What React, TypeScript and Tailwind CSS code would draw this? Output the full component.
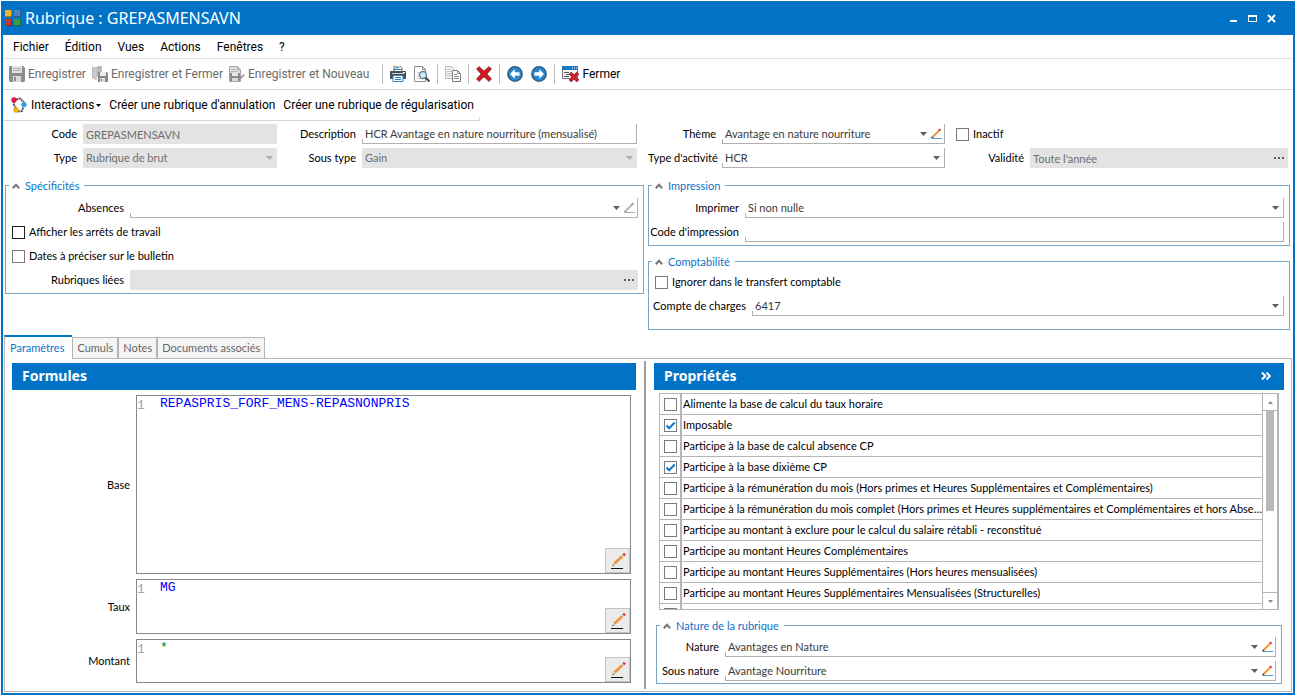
import React, { useState } from "react";

// Ligne de la liste des propriétés
interface Propriete {
  libelle: string;
  coche: boolean;
}

const menus = ["Fichier", "Édition", "Vues", "Actions", "Fenêtres", "?"];

const onglets = ["Paramètres", "Cumuls", "Notes", "Documents associés"];

const proprietesInitiales: Propriete[] = [
  { libelle: "Alimente la base de calcul du taux horaire", coche: false },
  { libelle: "Imposable", coche: true },
  { libelle: "Participe à la base de calcul absence CP", coche: false },
  { libelle: "Participe à la base dixième CP", coche: true },
  {
    libelle:
      "Participe à la rémunération du mois (Hors primes et Heures Supplémentaires et Complémentaires)",
    coche: false,
  },
  {
    libelle:
      "Participe à la rémunération du mois complet (Hors primes et Heures supplémentaires et Complémentaires et hors Abse…",
    coche: false,
  },
  {
    libelle: "Participe au montant à exclure pour le calcul du salaire rétabli - reconstitué",
    coche: false,
  },
  { libelle: "Participe au montant Heures Complémentaires", coche: false },
  {
    libelle: "Participe au montant Heures Supplémentaires (Hors heures mensualisées)",
    coche: false,
  },
  {
    libelle: "Participe au montant Heures Supplémentaires Mensualisées (Structurelles)",
    coche: false,
  },
  { libelle: "", coche: false },
];

/* ---------- Icônes ---------- */

const IconeApp = () => (
  <svg width="16" height="16" viewBox="0 0 16 16">
    <rect x="0" y="0" width="7" height="7" fill="#f2b61c" />
    <rect x="9" y="0" width="7" height="7" fill="#4f7fc4" />
    <rect x="0" y="9" width="7" height="7" fill="#c8372d" />
    <rect x="9" y="9" width="7" height="7" fill="#3c9a48" />
    <path d="M0 6.5h7M6.5 0v7M9 6.5h7M15.5 0v7M0 15.5h7M6.5 9v7M9 15.5h7M15.5 9v7" stroke="#000" strokeOpacity=".3" />
  </svg>
);

const IconeDisquette = () => (
  <svg width="16" height="16" viewBox="0 0 16 16">
    <path d="M1 0h13l2 2v13l-1 1H1l-1-1V1z" fill="#8c8c8c" />
    <rect x="3" y="0" width="10" height="7" fill="#e3e3e3" />
    <path d="M4 2.5h8M4 4.5h8" stroke="#b0b0b0" />
    <rect x="4" y="10" width="8" height="6" fill="#d9d9d9" />
    <rect x="5" y="11" width="2" height="4" fill="#8c8c8c" />
  </svg>
);

const IconeDisquetteFermer = () => (
  <svg width="16" height="16" viewBox="0 0 16 16">
    <path d="M0 1h5l1-1h4v11H4v3l-4-2z" fill="#b9b9b9" />
    <path d="M5 2v12L1 12V1z" fill="#c9c9c9" />
    <path d="M6 6h9l1 1v9H6z" fill="#8a8a8a" />
    <rect x="8" y="6" width="6" height="4" fill="#ececec" />
    <rect x="8" y="12" width="5" height="4" fill="#e0e0e0" />
    <rect x="9" y="13" width="1" height="2" fill="#777" />
  </svg>
);

const IconeDisquetteNouveau = () => (
  <svg width="16" height="16" viewBox="0 0 16 16">
    <path d="M.5.5h8l3 3v12H.5z" fill="#dedede" stroke="#a6a6a6" />
    <path d="M8.500.5v3h3" fill="none" stroke="#a6a6a6" />
    <path d="M2 3.500h5M2 5.500h7" stroke="#b5b5b5" />
    <rect x="1" y="7" width="10" height="8" fill="#8a8a8a" />
    <rect x="3" y="7" width="6" height="3" fill="#e8e8e8" />
    <rect x="3" y="12" width="6" height="3" fill="#dcdcdc" />
    <path d="M10 14l1-3 4-3 1 1-4 4z" fill="#9a9a9a" />
  </svg>
);

const IconeImprimante = () => (
  <svg width="16" height="16" viewBox="0 0 16 16">
    <path d="M4 0h6l2 2v4H4z" fill="#fff" stroke="#555" strokeWidth=".8" />
    <path d="M3 3.500h9M5 1.700h4" stroke="#2a7db8" />
    <rect x="0" y="5" width="16" height="8" rx="1" fill="#4b4f54" />
    <path d="M2 7.500h12" stroke="#cfd3d6" />
    <rect x="13" y="6" width="2" height="1" fill="#fff" />
    <path d="M3 9.500h10v6H3z" fill="#fff" stroke="#3c83b5" />
    <path d="M5 11.500h6M5 13.500h6" stroke="#2a7db8" />
  </svg>
);

const IconeApercu = () => (
  <svg width="16" height="16" viewBox="0 0 16 16">
    <path d="M.5.5h8l3 3v12H.5z" fill="#fff" stroke="#8c8c8c" />
    <path d="M8.500.5v3h3" fill="none" stroke="#8c8c8c" />
    <path d="M3 6.500h3M3 8.500h2M3 10.500h2M3 12.500h4" stroke="#d0d0d0" />
    <circle cx="9" cy="9" r="3.500" fill="#d3e9f7" stroke="#5b7f99" strokeWidth="1.300" />
    <path d="M11.500 11.500l4 4" stroke="#4a4a4a" strokeWidth="2.200" />
  </svg>
);

const IconeCopier = () => (
  <svg width="16" height="16" viewBox="0 0 16 16">
    <path d="M.5.5h6l3 3v9h-9z" fill="#f1f1f1" stroke="#bcbcbc" />
    <path d="M2 3.500h4M2 5.500h5M2 7.500h5M2 9.500h5" stroke="#c8c8c8" />
    <path d="M7.500 4.500h5l3 3v8h-8z" fill="#fff" stroke="#7d7d7d" />
    <path d="M12.500 4.500v3h3M9 8.500h3M9 10.500h5M9 12.500h5" fill="none" stroke="#8d8d8d" />
  </svg>
);

const IconeSupprimer = () => (
  <svg width="16" height="16" viewBox="0 0 16 16">
    <path
      d="M3 .5L8 5l5-4.500 2.500 2.500L11 8l4.500 5-2.500 2.500L8 11l-5 4.500L.5 13 5 8 .5 3z"
      fill="#d3151f"
      stroke="#7d4a4c"
      strokeWidth=".8"
    />
  </svg>
);

const IconeFleche = ({ versDroite }: { versDroite?: boolean }) => (
  <svg width="16" height="16" viewBox="0 0 16 16">
    <circle cx="8" cy="8" r="7.200" fill="#2786cc" stroke="#35597a" strokeWidth="1.400" />
    <path
      d={versDroite ? "M13 8L8.300 3.300v3H3.500v3.400h4.800v3z" : "M3 8l4.700-4.700v3h4.800v3.400H7.700v3z"}
      fill="#fff"
    />
  </svg>
);

const IconeFermer = () => (
  <svg width="17" height="16" viewBox="0 0 17 16">
    <path d="M.5.500h15v12H.5z" fill="#f4f4f4" stroke="#777" />
    <rect x="0" y="0" width="16" height="4" fill="#1e78bd" />
    <path d="M10 2h1M12 2h1M14 2h1" stroke="#fff" />
    <path d="M2 6.500h5M4 8.500h3M2 10.500h5" stroke="#555" />
    <path d="M8 7l8 8M16 7l-8 8" stroke="#8f3339" strokeWidth="3.600" />
    <path d="M8 7l8 8M16 7l-8 8" stroke="#d3202a" strokeWidth="2.400" />
  </svg>
);

const IconeInteractions = () => (
  <svg width="16" height="16" viewBox="0 0 16 16">
    <path d="M3 4v4l3 5M5 2.500l4-1 4 4M13 8l-2 6-5 .500" fill="none" stroke="#5c5c5c" strokeWidth="2" strokeDasharray="2.200 .6" />
    <circle cx="3" cy="3" r="2.700" fill="#e5173f" />
    <circle cx="13" cy="7.500" r="2.600" fill="#2ea3e6" />
    <circle cx="5" cy="13" r="2.700" fill="#f2b211" />
  </svg>
);

// Petit crayon des champs, grisé quand le champ est vide
const IconeCrayon = ({ gris }: { gris?: boolean }) => (
  <svg width="11" height="11" viewBox="0 0 12 12">
    <path d="M1 11.500h11" stroke={gris ? "#9a9a9a" : "#3f8fc6"} />
    <path d="M1.800 9.800L9 2.600" stroke={gris ? "#b5b5b5" : "#f0962c"} strokeWidth="2.200" />
    <path d="M8.800 2.800l1.500-1.500" stroke={gris ? "#999" : "#c9304c"} strokeWidth="2.300" />
    <path d="M0 11.500l.8-2.600 1.900 1.800z" fill={gris ? "#888" : "#333"} />
  </svg>
);

const IconeCrayonBouton = () => (
  <svg width="16" height="16" viewBox="0 0 16 16">
    <path d="M1 15.500h12" stroke="#111" />
    <path d="M4.500 10.500l8-7.500" stroke="#f2913a" strokeWidth="2.600" />
    <path d="M12 3.500l1.300-1.200" stroke="#d9cfc6" strokeWidth="2.600" />
    <path d="M13.300 2.300l1.700-1.500" stroke="#d63c35" strokeWidth="2.800" />
    <path d="M2.500 13l1-3.500 2.200 2.300z" fill="#e8c9a0" />
    <path d="M2.300 13.200l.6-1.700 1 1z" fill="#222" />
  </svg>
);

const Triangle = ({ className = "text-[#5f5f5f]" }: { className?: string }) => (
  <svg width="7" height="4" viewBox="0 0 7 4" className={className}>
    <path d="M0 0h7L3.500 4z" fill="currentColor" />
  </svg>
);

const TroisPoints = () => (
  <svg width="11" height="2" viewBox="0 0 11 2">
    <path d="M0 0h2v2H0zM4 0h2v2H4zM8 0h2v2H8z" fill="#5a5a5a" />
  </svg>
);

/* ---------- Champs ---------- */

const styleActif =
  "relative flex h-5 min-w-0 items-center border-r border-b border-[#b2b2b2] text-[#3b3b3b] before:absolute before:bottom-0 before:left-0 before:h-1 before:w-px before:bg-[#b2b2b2]";
const styleInactif = "relative flex h-5 min-w-0 items-center bg-[#e3e3e3] text-[#6e6e6e]";

const Libelle = ({ pour, children }: { pour: string; children: React.ReactNode }) => (
  <label htmlFor={pour} className="pr-1.5 text-right whitespace-nowrap">
    {children}
  </label>
);

interface ChampProps {
  id: string;
  valeur?: string;
  inactif?: boolean;
  points?: boolean;
}

const ChampTexte = ({ id, valeur = "", inactif, points }: ChampProps) => (
  <div className={inactif ? styleInactif : styleActif}>
    <input
      id={id}
      type="text"
      defaultValue={valeur}
      disabled={inactif}
      className="h-full w-full min-w-0 bg-transparent pl-[3px] outline-none"
    />
    {points && (
      <button type="button" className="flex h-full shrink-0 items-center pr-[3px]">
        <TroisPoints />
      </button>
    )}
  </div>
);

interface ListeProps {
  id: string;
  valeur?: string;
  inactif?: boolean;
  crayon?: "couleur" | "gris";
}

const ChampListe = ({ id, valeur = "", inactif, crayon }: ListeProps) => (
  <div className={inactif ? styleInactif : styleActif}>
    <div className="relative flex h-full min-w-0 flex-1 items-center">
      <select
        id={id}
        disabled={inactif}
        className="h-full w-full appearance-none bg-transparent pr-4 pl-[3px] outline-none disabled:opacity-100"
      >
        <option>{valeur}</option>
      </select>
      <span className="pointer-events-none absolute right-1">
        <Triangle className={inactif ? "text-[#b0b0b0]" : undefined} />
      </span>
    </div>
    {crayon && (
      <button type="button" className="flex h-full w-[13px] shrink-0 items-center">
        <IconeCrayon gris={crayon === "gris"} />
      </button>
    )}
  </div>
);

// Case à cocher avec la coche bleue dessinée par-dessus
const Case = ({ id, coche = false, fonce }: { id: string; coche?: boolean; fonce?: boolean }) => (
  <span className="relative flex size-[13px] shrink-0">
    <input
      id={id}
      type="checkbox"
      defaultChecked={coche}
      className={`peer size-[13px] appearance-none border bg-white ${
        fonce ? "border-[#1f1f1f]" : "border-[#7a7a7a]"
      }`}
    />
    <svg
      viewBox="0 0 13 13"
      className="pointer-events-none absolute inset-0 hidden size-[13px] peer-checked:block"
    >
      <path d="M2.500 6.500l2.700 2.800L10.700 3.500" fill="none" stroke="#0a7bd0" strokeWidth="2" />
    </svg>
  </span>
);

const CaseLibelle = ({ id, libelle, fonce }: { id: string; libelle: string; fonce?: boolean }) => (
  <div className="flex h-5 items-center gap-1">
    <Case id={id} fonce={fonce} />
    <label htmlFor={id}>{libelle}</label>
  </div>
);

// Groupe repliable
const Groupe = ({
  titre,
  className = "",
  children,
}: {
  titre: string;
  className?: string;
  children: React.ReactNode;
}) => {
  const [ouvert, setOuvert] = useState(true);

  return (
    <fieldset className="min-w-0 border border-[#7ba5c4]">
      <legend className="ml-[3px] flex h-[17px] items-center px-[3px]">
        <button
          type="button"
          aria-expanded={ouvert}
          onClick={() => setOuvert(!ouvert)}
          className="flex items-center gap-[5px] pr-0.5 text-[#0a73c8]"
        >
          <svg
            width="8"
            height="6"
            viewBox="0 0 8 6"
            className={ouvert ? "" : "rotate-180"}
          >
            <path d="M.8 5.200L4 1.800l3.200 3.400" fill="none" stroke="#777" strokeWidth="2" />
          </svg>
          {titre}
        </button>
      </legend>
      {ouvert && <div className={className}>{children}</div>}
    </fieldset>
  );
};

/* ---------- Barres ---------- */

const BoutonOutil = ({
  icone,
  libelle,
  inactif,
}: {
  icone: React.ReactNode;
  libelle?: string;
  inactif?: boolean;
}) => (
  <button
    type="button"
    disabled={inactif}
    className="flex items-center gap-[3px] whitespace-nowrap disabled:text-[#6b6b6b]"
  >
    {icone}
    {libelle}
  </button>
);

const Separateur = () => <span className="-mx-px h-5 w-px bg-[#bdbdbd]" />;

const BarreTitre = () => (
  <header className="flex h-[34px] items-center gap-1 bg-[#0173c7] pr-[17px] pl-[2px] text-white">
    <IconeApp />
    <h1 className="flex-1 font-['Noto_Sans',sans-serif] text-base">Rubrique : GREPASMENSAVN</h1>
    <div className="flex gap-2.5">
      <button type="button">
        <svg width="9" height="9" viewBox="0 0 9 9">
          <path d="M1 7h7" stroke="#fff" strokeWidth="2" />
        </svg>
      </button>
      <button type="button">
        <svg width="9" height="9" viewBox="0 0 9 9">
          <path d="M0 1h9v7H0zM1 3v4h7V3z" fill="#fff" fillRule="evenodd" />
        </svg>
      </button>
      <button type="button">
        <svg width="9" height="9" viewBox="0 0 9 9">
          <path d="M1 1l7 7M8 1L1 8" stroke="#fff" strokeWidth="2" />
        </svg>
      </button>
    </div>
  </header>
);

const BarreOutils = () => (
  <div className="flex h-[31px] items-center gap-1.5 border-b border-[#d8d8d8] pl-1.5">
    <BoutonOutil icone={<IconeDisquette />} libelle="Enregistrer" inactif />
    <BoutonOutil icone={<IconeDisquetteFermer />} libelle="Enregistrer et Fermer" inactif />
    <BoutonOutil icone={<IconeDisquetteNouveau />} libelle="Enregistrer et Nouveau" inactif />
    <div className="flex items-center gap-2 pl-2">
      <Separateur />
      <BoutonOutil icone={<IconeImprimante />} />
      <BoutonOutil icone={<IconeApercu />} />
      <Separateur />
      <BoutonOutil icone={<IconeCopier />} />
      <Separateur />
      <BoutonOutil icone={<IconeSupprimer />} />
      <Separateur />
      <BoutonOutil icone={<IconeFleche />} />
      <BoutonOutil icone={<IconeFleche versDroite />} />
      <Separateur />
      <BoutonOutil icone={<IconeFermer />} libelle="Fermer" />
    </div>
  </div>
);

/* ---------- Onglet Paramètres ---------- */

const Editeur = ({
  id,
  libelle,
  valeur,
  hauteur,
  couleur = "text-[#0000ff]",
}: {
  id: string;
  libelle: string;
  valeur: string;
  hauteur: string;
  couleur?: string;
}) => (
  <div className={`flex ${hauteur}`}>
    <label htmlFor={id} className="w-[124px] shrink-0 self-center pr-1.5 text-right">
      {libelle}
    </label>
    <div className="relative flex min-w-0 flex-1 border border-[#85888f] font-['Liberation_Mono',monospace] text-[13px] leading-4">
      <span className="w-[23px] shrink-0 pt-0.5 text-[#a0a6ad]">1</span>
      <textarea
        id={id}
        defaultValue={valeur}
        spellCheck={false}
        className={`min-w-0 flex-1 resize-none outline-none ${couleur}`}
      />
      <button
        type="button"
        className="absolute right-0 bottom-0 flex size-[25px] items-center justify-center border border-[#c4c4c4] bg-[#ebebeb]"
      >
        <IconeCrayonBouton />
      </button>
    </div>
  </div>
);

const ListeProprietes = () => (
  <div className="mr-[5px] ml-[5px] flex h-[217px] border border-r-2 border-[#b5b5b5]">
    <div className="min-w-0 flex-1 overflow-hidden">
      <table className="w-full table-fixed border-separate border-spacing-0">
        <tbody>
          {proprietesInitiales.map((p, index) => (
            <tr key={index} className="h-[21px]">
              <td className="w-[22px] border-r-2 border-b border-[#b5b5b5] pl-1">
                <Case id={`propriete-${index}`} coche={p.coche} />
              </td>
              <td className="border-b border-[#b5b5b5] pl-px whitespace-nowrap">
                <label htmlFor={`propriete-${index}`}>{p.libelle}</label>
              </td>
            </tr>
          ))}
        </tbody>
      </table>
    </div>
    {/* Barre de défilement */}
    <div className="flex w-[15px] shrink-0 flex-col border-l border-[#b5b5b5]">
      <button
        type="button"
        className="flex h-[17px] items-center justify-center border-b border-[#b5b5b5]"
      >
        <svg width="5" height="3" viewBox="0 0 5 3">
          <path d="M0 3h5L2.500 0z" fill="#8a8a8a" />
        </svg>
      </button>
      <div className="flex flex-1 flex-col items-center">
        <div className="h-[100px] w-2 bg-[#b8b8b8]" />
      </div>
      <button
        type="button"
        className="flex h-[17px] items-center justify-center border-t border-[#b5b5b5]"
      >
        <svg width="5" height="3" viewBox="0 0 5 3">
          <path d="M0 0h5L2.500 3z" fill="#8a8a8a" />
        </svg>
      </button>
    </div>
  </div>
);

const styleEntete =
  "flex h-[27px] items-center justify-between bg-[#0173c7] px-2.5 pb-0.5 font-['Noto_Sans',sans-serif] text-sm font-bold text-white";

const PanneauParametres = () => (
  <div className="grid flex-1 grid-cols-[624fr_auto_630fr] gap-2 px-[7px] py-0.5">
    <section className="flex min-w-0 flex-col pt-0.5 pb-1.5">
      <h2 className={styleEntete}>Formules</h2>
      <div className="flex flex-1 flex-col gap-[5px] pt-[5px] pr-[5px]">
        <Editeur
          id="base"
          libelle="Base"
          valeur="REPASPRIS_FORF_MENS-REPASNONPRIS"
          hauteur="min-h-[100px] flex-1"
        />
        <Editeur id="taux" libelle="Taux" valeur="MG" hauteur="h-[55px]" />
        <Editeur
          id="montant"
          libelle="Montant"
          valeur="*"
          hauteur="h-11"
          couleur="text-[#008000]"
        />
      </div>
    </section>
    <div className="w-0.5 bg-[#a39c9c]" />
    <section className="flex min-w-0 flex-col pt-0.5 pb-[5px]">
      <h2 className={styleEntete}>
        Propriétés
        <button type="button" className="pr-[3px]">
          <svg width="10" height="8" viewBox="0 0 10 8">
            <path d="M1 .5L4.300 4 1 7.500M5.500.5L8.800 4 5.500 7.500" fill="none" stroke="#fff" strokeWidth="2" />
          </svg>
        </button>
      </h2>
      <div className="flex flex-col gap-[7px] pt-[3px]">
        <ListeProprietes />
        <div className="mr-0.5 ml-0.5">
          <Groupe
            titre="Nature de la rubrique"
            className="grid grid-cols-[68px_1fr] items-center gap-y-1 pt-[3px] pr-[5px] pb-0.5"
          >
            <Libelle pour="nature">Nature</Libelle>
            <ChampListe id="nature" valeur="Avantages en Nature" crayon="couleur" />
            <Libelle pour="sous-nature">Sous nature</Libelle>
            <ChampListe id="sous-nature" valeur="Avantage Nourriture" crayon="couleur" />
          </Groupe>
        </div>
      </div>
    </section>
  </div>
);

export default function App() {
  const [ongletActif, setOngletActif] = useState("Paramètres");

  return (
    <div className="flex min-h-screen flex-col bg-white p-px font-['Lato',sans-serif] text-[11px] leading-4 text-black">
      <div className="flex flex-1 flex-col border-2 border-t-0 border-[#0173c7]">
        <BarreTitre />

        <div className="font-['Roboto',sans-serif] text-xs">
          <nav className="flex h-6 items-center gap-4 border-b border-[#e2e2e2] pl-2.5">
            {menus.map((menu) => (
              <button key={menu} type="button">
                {menu}
              </button>
            ))}
          </nav>
          <BarreOutils />
          <div className="relative flex h-[31px] w-fit items-center gap-2 border-b border-[#d8d8d8] pr-1.5 pl-2 whitespace-nowrap after:absolute after:right-0 after:bottom-0 after:h-[3px] after:w-px after:bg-[#d8d8d8]">
            <button type="button" className="flex items-center gap-1">
              <IconeInteractions />
              <span className="flex items-center gap-0.5">
                Interactions
                <svg width="5" height="3" viewBox="0 0 5 3">
                  <path d="M0 0h5L2.500 3z" fill="#000" />
                </svg>
              </span>
            </button>
            <button type="button">Créer une rubrique d'annulation</button>
            <button type="button">Créer une rubrique de régularisation</button>
          </div>
        </div>

        <main className="flex flex-1 flex-col">
          {/* En-tête de la rubrique */}
          <div className="grid grid-cols-[639fr_642fr] gap-x-1 gap-y-[9px] pt-[3px] pr-[3px] pl-0.5">
            <div className="grid grid-cols-[78px_194fr_85px_275fr] items-center gap-y-1 pr-[7px]">
              <Libelle pour="code">Code</Libelle>
              <ChampTexte id="code" valeur="GREPASMENSAVN" inactif />
              <Libelle pour="description">Description</Libelle>
              <ChampTexte id="description" valeur="HCR Avantage en nature nourriture (mensualisé)" />
              <Libelle pour="type">Type</Libelle>
              <ChampListe id="type" valeur="Rubrique de brut" inactif />
              <Libelle pour="sous-type">Sous type</Libelle>
              <ChampListe id="sous-type" valeur="Gain" inactif />
            </div>

            <div className="grid grid-cols-[74px_223fr_85px_258fr] items-center gap-y-1 pr-0.5">
              <Libelle pour="theme">Thème</Libelle>
              <ChampListe id="theme" valeur="Avantage en nature nourriture" crayon="couleur" />
              <div className="col-span-2 pl-[11px]">
                <CaseLibelle id="inactif" libelle="Inactif" />
              </div>
              <Libelle pour="activite">Type d'activité</Libelle>
              <ChampListe id="activite" valeur="HCR" />
              <Libelle pour="validite">Validité</Libelle>
              <ChampTexte id="validite" valeur="Toute l'année" inactif points />
            </div>

            <div>
              <Groupe
                titre="Spécificités"
                className="flex flex-col gap-1 pt-1 pr-[5px] pb-[3px] pl-1.5"
              >
                <div className="grid grid-cols-[118px_1fr] items-center">
                  <Libelle pour="absences">Absences</Libelle>
                  <ChampListe id="absences" crayon="gris" />
                </div>
                <CaseLibelle id="arrets" libelle="Afficher les arrêts de travail" fonce />
                <CaseLibelle id="dates" libelle="Dates à préciser sur le bulletin" />
                <div className="grid grid-cols-[118px_1fr] items-center">
                  <Libelle pour="liees">Rubriques liées</Libelle>
                  <ChampTexte id="liees" inactif points />
                </div>
              </Groupe>
            </div>

            <div className="flex flex-col gap-[7px]">
              <Groupe
                titre="Impression"
                className="grid grid-cols-[96px_1fr] items-center gap-y-1 pt-1 pr-[5px] pb-[3px]"
              >
                <Libelle pour="imprimer">Imprimer</Libelle>
                <ChampListe id="imprimer" valeur="Si non nulle" />
                <Libelle pour="code-impression">Code d'impression</Libelle>
                <ChampTexte id="code-impression" />
              </Groupe>
              <Groupe titre="Comptabilité" className="flex flex-col gap-1 pt-0.5 pr-[5px] pb-[13px]">
                <div className="pl-1.5">
                  <CaseLibelle id="ignorer" libelle="Ignorer dans le transfert comptable" />
                </div>
                <div className="grid grid-cols-[103px_1fr] items-center">
                  <Libelle pour="compte">Compte de charges</Libelle>
                  <ChampListe id="compte" valeur="6417" />
                </div>
              </Groupe>
            </div>
          </div>

          {/* Onglets */}
          <div className="mx-px mt-[5px] mb-px flex flex-1 flex-col">
            <div role="tablist" className="flex items-end">
              {onglets.map((onglet) => (
                <button
                  key={onglet}
                  type="button"
                  role="tab"
                  aria-selected={onglet === ongletActif}
                  onClick={() => setOngletActif(onglet)}
                  className={
                    onglet === ongletActif
                      ? "relative -mb-px h-6 border-t-2 border-l border-t-[#0173c7] border-l-[#b5b5b5] bg-white pr-2 pl-[5px] text-[#0a73c8]"
                      : "h-[21px] border border-b-0 border-[#b5b5b5] bg-[#f5f5f5] px-1 text-[#666]"
                  }
                >
                  {onglet}
                </button>
              ))}
            </div>
            <div className="flex flex-1 flex-col border border-[#b5b5b5]">
              {ongletActif === "Paramètres" && <PanneauParametres />}
            </div>
          </div>
        </main>
      </div>
    </div>
  );
}
